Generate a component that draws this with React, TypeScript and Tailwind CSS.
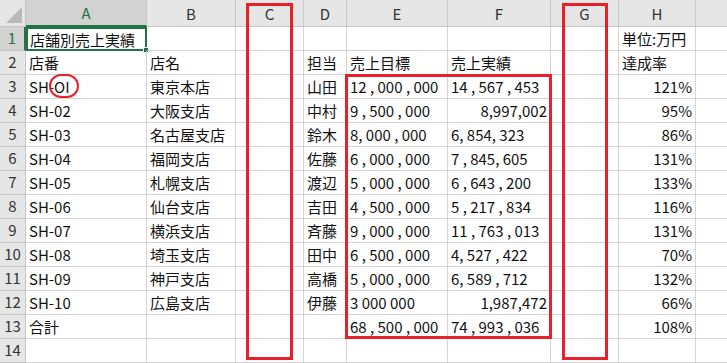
import React from 'react';

type Cell = { t: string; r?: boolean };

const cols = [
  { key: 'A', w: 121 },
  { key: 'B', w: 89 },
  { key: 'C', w: 68 },
  { key: 'D', w: 43 },
  { key: 'E', w: 101 },
  { key: 'F', w: 103 },
  { key: 'G', w: 68 },
  { key: 'H', w: 77 },
  { key: 'I', w: 40 },
];

const L = (t: string): Cell => ({ t });
const R = (t: string): Cell => ({ t, r: true });
const E = L('');

const rows: Cell[][] = [
  [L('店舗別売上実績'), E, E, E, E, E, E, L('単位:万円'), E],
  [L('店番'), L('店名'), E, L('担当'), L('売上目標'), L('売上実績'), E, L('達成率'), E],
  [L('SH-OI'), L('東京本店'), E, L('山田'), L('12 , 000 , 000'), L('14 , 567 , 453'), E, R('121%'), E],
  [L('SH-02'), L('大阪支店'), E, L('中村'), L('9 , 500 , 000'), R('8,997,002'), E, R('95%'), E],
  [L('SH-03'), L('名古屋支店'), E, L('鈴木'), L('8, 000 , 000'), L('6, 854, 323'), E, R('86%'), E],
  [L('SH-04'), L('福岡支店'), E, L('佐藤'), L('6 , 000 , 000'), L('7 , 845, 605'), E, R('131%'), E],
  [L('SH-05'), L('札幌支店'), E, L('渡辺'), L('5 , 000 , 000'), L('6 , 643 , 200'), E, R('133%'), E],
  [L('SH-06'), L('仙台支店'), E, L('吉田'), L('4 , 500 , 000'), L('5 , 217 , 834'), E, R('116%'), E],
  [L('SH-07'), L('横浜支店'), E, L('斉藤'), L('9 , 000 , 000'), L('11 , 763 , 013'), E, R('131%'), E],
  [L('SH-08'), L('埼玉支店'), E, L('田中'), L('6 , 500 , 000'), L('4, 527 , 422'), E, R('70%'), E],
  [L('SH-09'), L('神戸支店'), E, L('高橋'), L('5 , 000 , 000'), L('6, 589 , 712'), E, R('132%'), E],
  [L('SH-10'), L('広島支店'), E, L('伊藤'), L('3 000 000'), R('1,987,472'), E, R('66%'), E],
  [L('合計'), E, E, E, L('68 , 500 , 000'), L('74 , 993 , 036'), E, R('108%'), E],
  [E, E, E, E, E, E, E, E, E],
];

export default function App() {
  return (
    <div className="relative w-[727px] h-[363px] overflow-hidden bg-white font-['Noto_Sans_CJK_JP',sans-serif] text-[15px] text-[#111]">
      {/* column headers */}
      <div className="flex h-[27px]">
        <div className="w-[26px] shrink-0 flex items-end justify-end p-[3px] bg-[#e6e6e6] border-r border-b border-[#c6c6c6]">
          <div className="w-0 h-0 border-l-[16px] border-l-transparent border-b-[16px] border-b-[#b9b9b9]" />
        </div>
        {cols.map((c) => (
          <div
            key={c.key}
            style={{ width: c.w }}
            className={
              c.key === 'A'
                ? 'shrink-0 flex items-center justify-center bg-[#d2d2d2] text-[#217346] border-r border-[#c6c6c6] border-b-2 border-b-[#217346] pt-[2px]'
                : 'shrink-0 flex items-center justify-center bg-[#e6e6e6] text-[#333] border-r border-b border-[#c6c6c6] pt-[2px]'
            }
          >
            {c.key === 'I' ? '' : c.key}
          </div>
        ))}
      </div>

      {rows.map((row, i) => (
        <div key={i} className="flex h-[24px]">
          <div
            className={
              i === 0
                ? 'w-[26px] shrink-0 flex items-center justify-center bg-[#d2d2d2] text-[#217346] border-b border-[#c6c6c6] border-r-2 border-r-[#217346]'
                : 'w-[26px] shrink-0 flex items-center justify-center bg-[#e6e6e6] text-[#333] border-r border-b border-[#c6c6c6]'
            }
          >
            {i + 1}
          </div>
          {row.map((cell, j) => {
            const selected = i === 0 && j === 0;
            return (
              <div
                key={j}
                style={{ width: cols[j].w }}
                className={
                  'relative shrink-0 flex items-center whitespace-nowrap overflow-visible pt-[2px] ' +
                  (selected
                    ? 'border-2 border-[#217346] px-[2px] '
                    : 'px-[3px] border-r border-b border-[#d4d4d4] ') +
                  (cell.r ? 'justify-end' : 'justify-start')
                }
              >
                {cell.t}
                {selected && (
                  <span className="absolute -right-[4px] -bottom-[4px] w-[6px] h-[6px] bg-[#217346] border border-white" />
                )}
              </div>
            );
          })}
        </div>
      ))}

      {/* red annotation marks drawn over the sheet */}
      <div className="absolute left-[49px] top-[74px] w-[30px] h-[24px] rounded-full border-[2.5px] border-[#e8202a]" />
      <div className="absolute left-[246px] top-[3px] w-[47px] h-[357px] border-[3px] border-[#e8202a]" />
      <div className="absolute left-[562px] top-[3px] w-[46px] h-[357px] border-[3px] border-[#e8202a]" />
      <div className="absolute left-[345px] top-[74px] w-[207px] h-[265px] border-[3px] border-[#e8202a]" />
    </div>
  );
}
